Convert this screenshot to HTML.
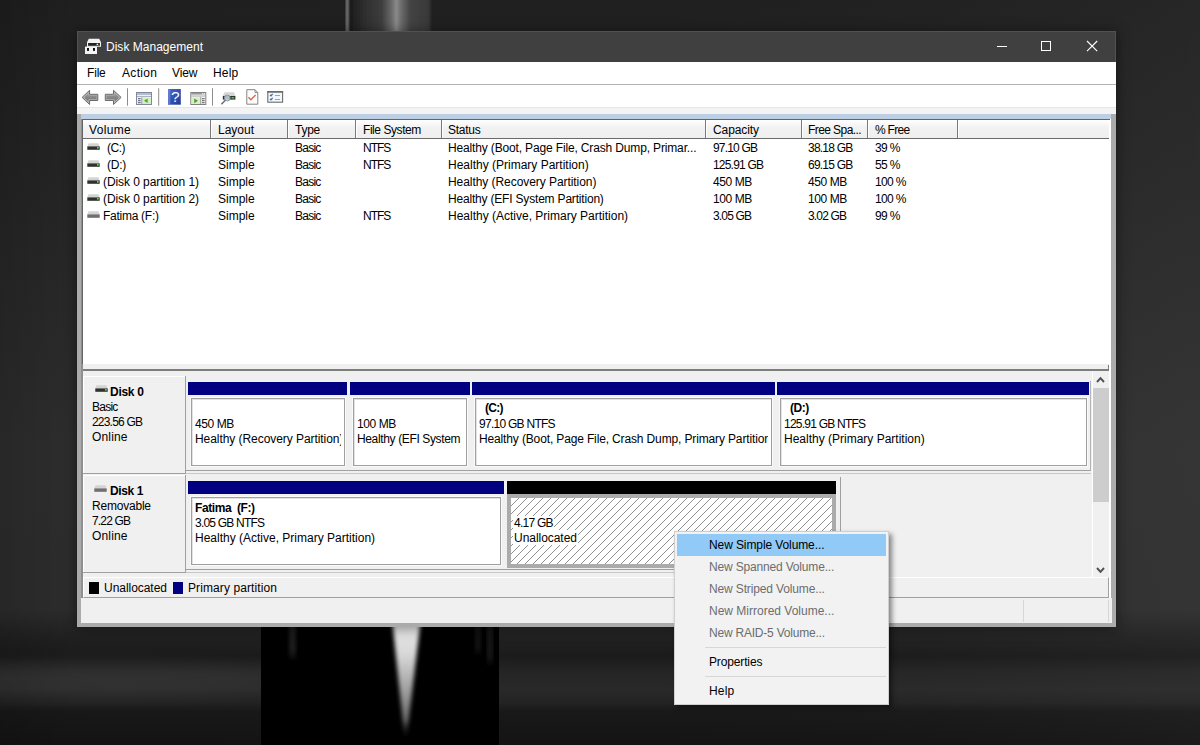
<!DOCTYPE html>
<html lang="en">
<head>
<meta charset="utf-8">
<title>Disk Management</title>
<style>
*{box-sizing:border-box;margin:0;padding:0}
html,body{width:1200px;height:745px;overflow:hidden;background:#232323}
body{font-family:"Liberation Sans",sans-serif;font-size:12px;color:#000;position:relative}
.a{position:absolute}
.t{position:absolute;white-space:nowrap;line-height:16px;height:16px;font-size:12px;color:#000}
.b{font-weight:bold}
#bg{position:absolute;left:0;top:0;width:1200px;height:745px;overflow:hidden;background:#242424}
#shadow{position:absolute;left:77px;top:31px;width:1039px;height:596px;box-shadow:0 1px 12px 1px rgba(0,0,0,.4)}
#title{left:77px;top:31px;width:1039px;height:31px;background:#404040;border:1px solid #515151;border-bottom:0}
#menubar{left:77px;top:62px;width:1039px;height:22px;background:#fff}
#menuline{left:77px;top:84px;width:1039px;height:1px;background:#b4b4b4}
#toolbar{left:77px;top:85px;width:1039px;height:22px;background:#fff}
#tbgap{left:77px;top:107px;width:1039px;height:7px;background:#f3f3f3;border-top:1px solid #e6e6e6}
#mdi{left:77px;top:114px;width:1039px;height:513px;background:#ababab}
#blueband{left:81px;top:114px;width:1030px;height:5px;background:#bccfe5}
#client{left:81px;top:119px;width:1030px;height:479px;background:#fff}
#status{left:81px;top:598px;width:1031px;height:25px;background:#f0f0f0}

#mdi2{left:81px;top:119px;width:2px;height:479px;background:#8f8f8f}
/* list view */
#lv{left:82px;top:119px;width:1028px;height:245px;background:#fff;border-top:1px solid #646464;border-left:1px solid #646464}
#lvhead{left:83px;top:120px;width:1026px;height:18px;background:linear-gradient(#fff,#f2f2f2 40%,#efefef)}
#lvheadline{left:83px;top:138px;width:1026px;height:1px;background:#6a6a6a}
.hd{position:absolute;top:120px;width:2px;height:18px;background:#7a7a7a;border-right:1px solid #fff}
.hd i{display:none}
/* splitter */
#split{left:83px;top:364px;width:1026px;height:5px;background:#f0f0f0}
#splitline{left:83px;top:369px;width:1026px;height:2px;background:#7d7d7d}
#splitv{left:1108px;top:365px;width:1px;height:5px;background:#7d7d7d}
/* lower pane */
#lower{left:83px;top:371px;width:1026px;height:227px;background:#f0f0f0}

/* disk rows */
.dlabel{position:absolute;left:83px;width:103px;background:#f0f0f0;border-right:1px solid #a0a0a0;border-bottom:1px solid #a0a0a0;box-shadow:inset 1px 1px 0 #fff}
.rowline{position:absolute;height:1px;background:#a0a0a0}
.bar{position:absolute;height:13px;background:#000080}
.part{position:absolute;background:#fff;border:1px solid #a0a0a0;box-shadow:inset 1px 1px 0 #e3e3e3, 0 0 0 1px #fafafa}
.unalloc{position:absolute;border:4px solid #ababab;background-color:#fff;
 background-image:repeating-linear-gradient(135deg,transparent 0,transparent 4.95px,#909090 5.0px,#909090 5.66px)}
/* legend */
#legend{left:83px;top:577px;width:1026px;height:21px;background:#f0f0f0;border-top:1px solid #fff;border-left:1px solid #fff;border-right:1px solid #a0a0a0;border-bottom:1px solid #a0a0a0}
#stat1{left:1023px;top:600px;width:1px;height:22px;background:#d7d7d7}
#stat2{left:1108px;top:600px;width:1px;height:22px;background:#d7d7d7}
/* scrollbar */
#sb{left:1093px;top:372px;width:16px;height:205px;background:#f0f0f0}
#sbthumb{left:1093px;top:388px;width:16px;height:114px;background:#cdcdcd}

/* title */
#ttext{left:106px;top:39px;color:#fff}
.cap{position:absolute;background:#fff}
/* menu */
.m{top:65px}
/* context menu */
#ctx{left:674px;top:531px;width:215px;height:174px;background:#f2f2f2;border:1px solid #cfcfcf;box-shadow:3px 3px 5px rgba(0,0,0,.45)}
#ctxhi{left:677px;top:534px;width:209px;height:22px;background:#91c9f7}
.ci{left:709px}
.cd{color:#6d6d6d}
.csep{position:absolute;left:705px;width:181px;height:1px;background:#d7d7d7}
</style>
</head>
<body>
<div id="bg"><svg class="a" style="left:0;top:0" width="1200" height="745" viewBox="0 0 1200 745">
<defs>
<linearGradient id="gv" x1="0" y1="0" x2="0" y2="1">
<stop offset="0.0000" stop-color="#202020"/><stop offset="0.1342" stop-color="#232323"/><stop offset="0.4027" stop-color="#2a2a2a"/><stop offset="0.6040" stop-color="#2f2f2f"/><stop offset="0.8188" stop-color="#2e2e2e"/><stop offset="0.8537" stop-color="#222222"/><stop offset="0.8805" stop-color="#1b1b1b"/><stop offset="0.9020" stop-color="#252525"/><stop offset="0.9262" stop-color="#292929"/><stop offset="0.9436" stop-color="#232323"/><stop offset="0.9544" stop-color="#191919"/><stop offset="1.0000" stop-color="#141414"/>
</linearGradient>
<linearGradient id="gh" x1="0" y1="0" x2="1" y2="0">
<stop offset="0" stop-color="#000" stop-opacity=".16"/><stop offset=".06" stop-color="#000" stop-opacity=".04"/><stop offset=".5" stop-color="#000" stop-opacity="0"/><stop offset="1" stop-color="#fff" stop-opacity=".03"/>
</linearGradient>
<linearGradient id="gobj" x1="0" y1="0" x2="1" y2="0">
<stop offset="0" stop-color="#232323"/><stop offset=".012" stop-color="#626262"/><stop offset=".035" stop-color="#626262"/><stop offset=".06" stop-color="#1c1c1c"/><stop offset=".2" stop-color="#2c2c2c"/><stop offset=".42" stop-color="#3d3d3d"/><stop offset=".54" stop-color="#6c6c6c"/><stop offset=".59" stop-color="#8a8a8a"/><stop offset=".65" stop-color="#6a6a6a"/><stop offset=".75" stop-color="#444"/><stop offset=".96" stop-color="#383838"/><stop offset="1" stop-color="#232323"/>
</linearGradient>
<linearGradient id="ghl" x1="0" y1="0" x2="0" y2="1">
<stop offset="0" stop-color="#ececec"/><stop offset=".3" stop-color="#d8d8d8"/><stop offset=".6" stop-color="#a0a0a0"/><stop offset=".85" stop-color="#666"/><stop offset="1" stop-color="#333" stop-opacity="0"/>
</linearGradient>
<filter id="b0" x="-10%" y="-10%" width="120%" height="120%"><feGaussianBlur stdDeviation=".7 0"/></filter>
<filter id="b3" x="-20%" y="-100%" width="140%" height="300%"><feGaussianBlur stdDeviation="30 9"/></filter>
<filter id="b1" x="-50%" y="-10%" width="200%" height="120%"><feGaussianBlur stdDeviation="2"/></filter>
<filter id="b2" x="-50%" y="-10%" width="200%" height="120%"><feGaussianBlur stdDeviation="2.5 4"/></filter>
</defs>
<rect width="1200" height="745" fill="url(#gv)"/>
<rect width="1200" height="745" fill="url(#gh)"/>
<rect x="345" y="-4" width="87" height="38" fill="url(#gobj)" filter="url(#b0)"/>
<ellipse cx="90" cy="678" rx="230" ry="16" fill="#fff" opacity=".05" filter="url(#b3)"/>
<rect x="261" y="620" width="238" height="125" fill="#000"/>
<polygon points="392,618 421,618 406.5,738 404.5,738" fill="url(#ghl)" filter="url(#b1)"/>
<rect x="290" y="622" width="5" height="34" fill="#777" opacity=".35" filter="url(#b2)"/>
<rect x="476" y="622" width="4" height="30" fill="#777" opacity=".25" filter="url(#b2)"/>
<rect x="488" y="622" width="4" height="40" fill="#777" opacity=".3" filter="url(#b2)"/>
</svg></div>
<div id="shadow"></div>
<div class="a" id="title"></div>
<div class="a" id="menubar"></div>
<div class="a" id="menuline"></div>
<div class="a" id="toolbar"></div>
<div class="a" id="tbgap"></div>
<div class="a" id="mdi"></div>
<div class="a" id="blueband"></div>
<div class="a" id="client"></div>
<div class="a" id="status"></div>

<div class="a" id="mdi2"></div>
<div class="a" id="lower"></div>
<div class="a" id="lv"></div>
<div class="a" id="lvhead"></div>
<div class="a" id="lvheadline"></div>
<div class="hd" style="left:210px"></div>
<div class="hd" style="left:287px"></div>
<div class="hd" style="left:355px"></div>
<div class="hd" style="left:441px"></div>
<div class="hd" style="left:705px"></div>
<div class="hd" style="left:801px"></div>
<div class="hd" style="left:867px"></div>
<div class="hd" style="left:957px"></div>
<div class="a" id="split"></div>
<div class="a" id="splitline"></div>
<div class="a" id="splitv"></div>
<span class="t" style="left:89px;top:122px;letter-spacing:0.33px">Volume</span>
<span class="t" style="left:218px;top:122px">Layout</span>
<span class="t" style="left:295px;top:122px;letter-spacing:-0.24px">Type</span>
<span class="t" style="left:363px;top:122px;letter-spacing:-0.44px">File System</span>
<span class="t" style="left:448px;top:122px;letter-spacing:-0.27px">Status</span>
<span class="t" style="left:713px;top:122px;letter-spacing:-0.1px">Capacity</span>
<span class="t" style="left:808px;top:122px;letter-spacing:-0.58px">Free Spa...</span>
<span class="t" style="left:875px;top:122px;letter-spacing:-0.72px">% Free</span>
<span class="t" style="left:107px;top:140px;letter-spacing:-0.47px">(C:)</span>
<span class="t" style="left:218px;top:140px">Simple</span>
<span class="t" style="left:295px;top:140px;letter-spacing:-0.76px">Basic</span>
<span class="t" style="left:363px;top:140px;letter-spacing:-1.01px">NTFS</span>
<span class="t" style="left:448px;top:140px;letter-spacing:-0.15px">Healthy (Boot, Page File, Crash Dump, Primar...</span>
<span class="t" style="left:713px;top:140px;letter-spacing:-0.81px">97.10 GB</span>
<span class="t" style="left:808px;top:140px;letter-spacing:-0.77px">38.18 GB</span>
<span class="t" style="left:875px;top:140px;letter-spacing:-0.62px">39 %</span>
<span class="t" style="left:107px;top:157px;letter-spacing:-0.23px">(D:)</span>
<span class="t" style="left:218px;top:157px">Simple</span>
<span class="t" style="left:295px;top:157px;letter-spacing:-0.76px">Basic</span>
<span class="t" style="left:363px;top:157px;letter-spacing:-1.01px">NTFS</span>
<span class="t" style="left:448px;top:157px">Healthy (Primary Partition)</span>
<span class="t" style="left:713px;top:157px;letter-spacing:-0.8px">125.91 GB</span>
<span class="t" style="left:808px;top:157px;letter-spacing:-0.77px">69.15 GB</span>
<span class="t" style="left:875px;top:157px;letter-spacing:-0.62px">55 %</span>
<span class="t" style="left:103px;top:174px;letter-spacing:-0.07px">(Disk 0 partition 1)</span>
<span class="t" style="left:218px;top:174px">Simple</span>
<span class="t" style="left:295px;top:174px;letter-spacing:-0.76px">Basic</span>
<span class="t" style="left:448px;top:174px;letter-spacing:-0.06px">Healthy (Recovery Partition)</span>
<span class="t" style="left:713px;top:174px;letter-spacing:-0.41px">450 MB</span>
<span class="t" style="left:808px;top:174px;letter-spacing:-0.41px">450 MB</span>
<span class="t" style="left:875px;top:174px;letter-spacing:-0.68px">100 %</span>
<span class="t" style="left:103px;top:191px;letter-spacing:-0.07px">(Disk 0 partition 2)</span>
<span class="t" style="left:218px;top:191px">Simple</span>
<span class="t" style="left:295px;top:191px;letter-spacing:-0.76px">Basic</span>
<span class="t" style="left:448px;top:191px;letter-spacing:-0.19px">Healthy (EFI System Partition)</span>
<span class="t" style="left:713px;top:191px;letter-spacing:-0.41px">100 MB</span>
<span class="t" style="left:808px;top:191px;letter-spacing:-0.41px">100 MB</span>
<span class="t" style="left:875px;top:191px;letter-spacing:-0.68px">100 %</span>
<span class="t" style="left:103px;top:208px;letter-spacing:-0.27px">Fatima (F:)</span>
<span class="t" style="left:218px;top:208px">Simple</span>
<span class="t" style="left:295px;top:208px;letter-spacing:-0.76px">Basic</span>
<span class="t" style="left:363px;top:208px;letter-spacing:-1.01px">NTFS</span>
<span class="t" style="left:448px;top:208px">Healthy (Active, Primary Partition)</span>
<span class="t" style="left:713px;top:208px;letter-spacing:-0.84px">3.05 GB</span>
<span class="t" style="left:808px;top:208px;letter-spacing:-0.84px">3.02 GB</span>
<span class="t" style="left:875px;top:208px;letter-spacing:-0.62px">99 %</span>

<div class="dlabel" style="top:376px;height:98px"></div>
<div class="dlabel" style="top:475px;height:98px"></div>
<div class="rowline" style="left:186px;top:470px;width:905px"></div>
<div class="rowline" style="left:186px;top:473px;width:905px;background:#c8c8c8"></div>
<div class="rowline" style="left:186px;top:569px;width:655px"></div>
<div class="rowline" style="left:186px;top:572px;width:655px;background:#c8c8c8"></div>
<div class="a" style="left:840px;top:477px;width:1px;height:96px;background:#a0a0a0"></div>
<div class="a" style="left:1090px;top:381px;width:1px;height:90px;background:#b4b4b4"></div>
<div class="a" style="left:1092px;top:372px;width:1px;height:205px;background:#fff"></div>
<div class="bar" style="left:188px;top:382px;width:159px"></div>
<div class="bar" style="left:350px;top:382px;width:120px"></div>
<div class="bar" style="left:472px;top:382px;width:303px"></div>
<div class="bar" style="left:777px;top:382px;width:312px"></div>
<div class="part" style="left:191px;top:398px;width:154px;height:68px"></div>
<div class="part" style="left:353px;top:398px;width:114px;height:68px"></div>
<div class="part" style="left:475px;top:398px;width:297px;height:68px"></div>
<div class="part" style="left:780px;top:398px;width:307px;height:68px"></div>
<div class="bar" style="left:188px;top:481px;width:316px"></div>
<div class="bar" style="left:507px;top:481px;width:329px;background:#000"></div>
<div class="part" style="left:191px;top:497px;width:310px;height:68px"></div>
<div class="unalloc" style="left:507px;top:494px;width:329px;height:74px"></div>
<div class="a" id="sb"></div>
<div class="a" id="sbthumb"></div>
<div class="a" id="legend"></div>
<div class="a" id="stat1"></div>
<div class="a" id="stat2"></div>
<div class="a" style="left:89px;top:582px;width:10px;height:12px;background:#000"></div>
<div class="a" style="left:173px;top:582px;width:10px;height:12px;background:#000080"></div>
<span class="t" style="left:104px;top:580px;letter-spacing:-0.04px">Unallocated</span>
<span class="t" style="left:188px;top:580px;letter-spacing:0.1px">Primary partition</span>

<span class="t b" style="left:110px;top:384px;letter-spacing:-0.27px">Disk 0</span>
<span class="t" style="left:92px;top:399px;letter-spacing:-0.76px">Basic</span>
<span class="t" style="left:92px;top:414px;letter-spacing:-0.8px">223.56 GB</span>
<span class="t" style="left:92px;top:429px;letter-spacing:0.16px">Online</span>
<span class="t b" style="left:110px;top:483px;letter-spacing:-0.37px">Disk 1</span>
<span class="t" style="left:92px;top:498px;letter-spacing:-0.21px">Removable</span>
<span class="t" style="left:92px;top:513px;letter-spacing:-0.84px">7.22 GB</span>
<span class="t" style="left:92px;top:528px;letter-spacing:0.16px">Online</span>

<span class="t" style="left:195px;top:416px;letter-spacing:-0.41px">450 MB</span>
<span class="t" style="left:195px;top:431px;width:146px;overflow:hidden;letter-spacing:-0.06px">Healthy (Recovery Partition)</span>
<span class="t" style="left:357px;top:416px;letter-spacing:-0.41px">100 MB</span>
<span class="t" style="left:357px;top:431px;letter-spacing:-0.36px">Healthy (EFI System</span>
<span class="t b" style="left:485px;top:400px;letter-spacing:-0.69px">(C:)</span>
<span class="t" style="left:479px;top:416px;letter-spacing:-0.73px">97.10 GB NTFS</span>
<span class="t" style="left:479px;top:431px;width:289px;overflow:hidden;letter-spacing:-0.14px">Healthy (Boot, Page File, Crash Dump, Primary Partition</span>
<span class="t b" style="left:790px;top:400px;letter-spacing:-0.45px">(D:)</span>
<span class="t" style="left:784px;top:416px;letter-spacing:-0.77px">125.91 GB NTFS</span>
<span class="t" style="left:784px;top:431px">Healthy (Primary Partition)</span>
<span class="t b" style="left:195px;top:500px;white-space:pre;letter-spacing:-0.42px">Fatima  (F:)</span>
<span class="t" style="left:195px;top:515px;letter-spacing:-0.79px">3.05 GB NTFS</span>
<span class="t" style="left:195px;top:530px">Healthy (Active, Primary Partition)</span>
<span class="t" style="left:513px;top:516px;height:14px;line-height:14px;background:#fff;padding:0 1px;letter-spacing:-0.74px">4.17 GB</span>
<span class="t" style="left:513px;top:530px;height:15px;line-height:16px;background:#fff;padding:0 1px;letter-spacing:-0.04px">Unallocated</span>

<span class="t" id="ttext" style="letter-spacing:0.02px">Disk Management</span>
<div class="cap" style="left:997px;top:46px;width:10px;height:1px"></div>
<div class="a" style="left:1041px;top:41px;width:10px;height:10px;border:1px solid #fff"></div>
<svg class="a" style="left:1086px;top:40px" width="13" height="13" viewBox="0 0 13 13"><path d="M1 1 L11.2 11.2 M11.2 1 L1 11.2" stroke="#fff" stroke-width="1.1" fill="none"/></svg>
<span class="t m" style="left:87px;letter-spacing:-0.18px">File</span>
<span class="t m" style="left:122px;letter-spacing:0.33px">Action</span>
<span class="t m" style="left:172px;letter-spacing:-0.1px">View</span>
<span class="t m" style="left:213px;letter-spacing:0.2px">Help</span>

<div class="a" id="ctx"></div>
<div class="a" id="ctxhi"></div>
<span class="t ci" style="top:537px;letter-spacing:-0.1px">New Simple Volume...</span>
<span class="t ci cd" style="top:559px;letter-spacing:-0.17px">New Spanned Volume...</span>
<span class="t ci cd" style="top:581px;letter-spacing:-0.14px">New Striped Volume...</span>
<span class="t ci cd" style="top:603px">New Mirrored Volume...</span>
<span class="t ci cd" style="top:625px;letter-spacing:-0.21px">New RAID-5 Volume...</span>
<div class="csep" style="top:647px"></div>
<span class="t ci" style="top:654px;letter-spacing:-0.14px">Properties</span>
<div class="csep" style="top:676px"></div>
<span class="t ci" style="top:683px;letter-spacing:0.2px">Help</span>
<svg class="a" style="left:86.5px;top:143.3px" width="13" height="8" viewBox="0 0 13 8"><path d="M1.5 0.3h10l1.2 3.4h-12.4z" fill="#d4d4d4"/><rect x="0.3" y="3.4" width="12.4" height="3.4" fill="#2c342c"/><rect x="10" y="4" width="1.6" height="1.6" fill="#5fe05f"/></svg>
<svg class="a" style="left:86.5px;top:160.3px" width="13" height="8" viewBox="0 0 13 8"><path d="M1.5 0.3h10l1.2 3.4h-12.4z" fill="#d4d4d4"/><rect x="0.3" y="3.4" width="12.4" height="3.4" fill="#2c342c"/><rect x="10" y="4" width="1.6" height="1.6" fill="#5fe05f"/></svg>
<svg class="a" style="left:86.5px;top:177.3px" width="13" height="8" viewBox="0 0 13 8"><path d="M1.5 0.3h10l1.2 3.4h-12.4z" fill="#d4d4d4"/><rect x="0.3" y="3.4" width="12.4" height="3.4" fill="#2c342c"/><rect x="10" y="4" width="1.6" height="1.6" fill="#5fe05f"/></svg>
<svg class="a" style="left:86.5px;top:194.3px" width="13" height="8" viewBox="0 0 13 8"><path d="M1.5 0.3h10l1.2 3.4h-12.4z" fill="#d4d4d4"/><rect x="0.3" y="3.4" width="12.4" height="3.4" fill="#2c342c"/><rect x="10" y="4" width="1.6" height="1.6" fill="#5fe05f"/></svg>
<svg class="a" style="left:86.5px;top:211.3px" width="13" height="8" viewBox="0 0 13 8"><path d="M1.5 0.3h10l1.2 3.4h-12.4z" fill="#d4d4d4"/><rect x="0.3" y="3.4" width="12.4" height="3.4" fill="#6f6f6f"/></svg>
<svg class="a" style="left:94.5px;top:385px" width="13" height="8" viewBox="0 0 13 8"><path d="M1.5 0.3h10l1.2 3.4h-12.4z" fill="#d4d4d4"/><rect x="0.3" y="3.4" width="12.4" height="3.4" fill="#2c342c"/><rect x="10" y="4" width="1.6" height="1.6" fill="#5fe05f"/></svg>
<svg class="a" style="left:94px;top:484.5px" width="13" height="8" viewBox="0 0 13 8"><path d="M1.5 0.3h10l1.2 3.4h-12.4z" fill="#d4d4d4"/><rect x="0.3" y="3.4" width="12.4" height="3.4" fill="#6f6f6f"/></svg>
<svg class="a" style="left:84px;top:38px" width="18" height="17" viewBox="0 0 18 17">
<path d="M4.8 0.8h10.4l1.8 3.4v4.6h-14v-4.6z" fill="#f2f2f2"/>
<rect x="4.1" y="5" width="11.8" height="2.8" fill="#1e241e"/>
<rect x="12.6" y="5.7" width="1.6" height="1.5" fill="#d8ffd8"/>
<rect x="1" y="8.4" width="12" height="7.7" rx=".6" fill="#f4f4f4"/>
<rect x="3" y="10" width="2" height="2.9" fill="#111"/>
<rect x="9" y="10" width="2" height="2.9" fill="#111"/>
</svg>
<svg class="a" style="left:80px;top:88px" width="210" height="19" viewBox="80 88 210 19">
<defs><linearGradient id="ga" x1="0" y1="0" x2="0" y2="1"><stop offset="0" stop-color="#9a9a9a"/><stop offset="1" stop-color="#757575"/></linearGradient>
<linearGradient id="gq" x1="0" y1="0" x2="1" y2="1"><stop offset="0" stop-color="#4a68c8"/><stop offset="1" stop-color="#1c3a98"/></linearGradient></defs>
<path d="M82.1 97.4 L89.6 90.3 V94.3 H97.8 V100.5 H89.6 V104.5 Z" fill="#b4b4b4" stroke="#6c6c6c" stroke-width="1" stroke-linejoin="round"/>
<path d="M84.2 97.4 L88.4 93.3 V95.5 H96.6 V99.3 H88.4 V101.5 Z" fill="url(#ga)"/>
<path d="M121.1 97.4 L113.5 90.3 V94.3 H105.3 V100.5 H113.5 V104.5 Z" fill="#b4b4b4" stroke="#6c6c6c" stroke-width="1" stroke-linejoin="round"/>
<path d="M119 97.4 L114.7 93.3 V95.5 H106.5 V99.3 H114.7 V101.5 Z" fill="url(#ga)"/>
<rect x="127" y="88.3" width="1" height="17.4" fill="#8c8c8c"/>
<rect x="158.2" y="88.3" width="1" height="17.4" fill="#8c8c8c"/>
<rect x="212" y="88.3" width="1" height="17.4" fill="#8c8c8c"/>
<!-- icon3 -->
<rect x="136.5" y="92.5" width="15" height="12" fill="#eef2f8" stroke="#8088a0" stroke-width="1"/>
<rect x="137" y="93" width="14" height="2" fill="#b4bccf"/>
<rect x="137" y="96" width="14" height="1" fill="#aab2c4"/>
<rect x="142.2" y="97.6" width="8.6" height="6.4" fill="#d4edc2"/>
<path d="M147.6 98.5v4.6l-3.6-2.3z" fill="#58a030"/>
<rect x="138" y="98.2" width="2.6" height="1" fill="#556"/><rect x="138" y="100.2" width="2.6" height="1" fill="#556"/><rect x="138" y="102.2" width="2.6" height="1" fill="#556"/>
<rect x="141.4" y="97.4" width=".8" height="6.8" fill="#8088a0"/>
<!-- help -->
<rect x="168" y="89" width="12.8" height="15.7" fill="url(#gq)"/>
<rect x="168" y="89" width="2.4" height="15.7" fill="#6d86d8" opacity=".7"/>
<text x="175.2" y="102.3" font-family="Liberation Sans, sans-serif" font-size="15.5" fill="#fff" text-anchor="middle">?</text>
<!-- icon5 -->
<rect x="190.8" y="92.5" width="15" height="12" fill="#f4f6fa" stroke="#808080" stroke-width="1"/>
<rect x="191.3" y="93" width="14" height="1.6" fill="#9a9a9a"/>
<rect x="202" y="93.2" width="1.2" height="1.2" fill="#fff"/><rect x="203.8" y="93.2" width="1.2" height="1.2" fill="#fff"/>
<rect x="191.3" y="95.6" width="14" height=".9" fill="#a8a8a8"/>
<rect x="191.6" y="97.4" width="8.6" height="6.6" fill="#d8efc8"/>
<path d="M194.2 98.4v4.8l3.8-2.4z" fill="#5a9a36"/>
<rect x="200.4" y="97" width=".8" height="7.2" fill="#808080"/>
<rect x="202" y="98.2" width="2.6" height="1" fill="#555"/><rect x="202" y="100.2" width="2.6" height="1" fill="#555"/><rect x="202" y="102.2" width="2.6" height="1" fill="#555"/>
<!-- icon6 drive+magnifier -->
<path d="M224.4 92.3h9.6l1.4 3.8h-12.6z" fill="#d6d6d6"/>
<rect x="222.8" y="96" width="12.6" height="3.6" fill="#2a382c"/>
<rect x="231.6" y="97" width="2.6" height="1.6" fill="#3fbf4f"/>
<circle cx="227.3" cy="98" r="2.9" fill="#cfe0ee" fill-opacity=".8" stroke="#8a8f98" stroke-width="1"/>
<path d="M225.3 100.2L221.4 104.3" stroke="#666c78" stroke-width="1.5"/>
<!-- icon7 doc check -->
<path d="M246.8 89.7h8.2l2.8 2.9v11.6h-11z" fill="#fdfdfd" stroke="#858585" stroke-width="1"/>
<path d="M255 89.7v2.9h2.8" fill="none" stroke="#858585" stroke-width=".9"/>
<path d="M248.4 97.3l2.5 2.4l4.7-4.8" fill="none" stroke="#d8684e" stroke-width="1.5"/>
<!-- icon8 checklist -->
<rect x="267.8" y="91.6" width="14.8" height="10.6" fill="#f2f7fc" stroke="#6c6c6c" stroke-width="1.1"/>
<rect x="267.3" y="91" width="15.8" height="1.7" fill="#6c6c6c"/>
<path d="M270 94.8l1 1.1l1.6-2" fill="none" stroke="#3e62a8" stroke-width="1.1"/>
<path d="M270 98.8l1 1.1l1.6-2" fill="none" stroke="#3e62a8" stroke-width="1.1"/>
<rect x="275" y="95" width="5" height=".9" fill="#999"/><rect x="275" y="99" width="5" height=".9" fill="#999"/>
</svg>
<svg class="a" style="left:1096px;top:376px" width="10" height="8" viewBox="0 0 10 8"><path d="M1 6L4.5 2.2L8 6" fill="none" stroke="#505050" stroke-width="1.9"/></svg>
<svg class="a" style="left:1096px;top:566px" width="10" height="8" viewBox="0 0 10 8"><path d="M1 2L4.5 5.8L8 2" fill="none" stroke="#505050" stroke-width="1.9"/></svg>
</body>
</html>
